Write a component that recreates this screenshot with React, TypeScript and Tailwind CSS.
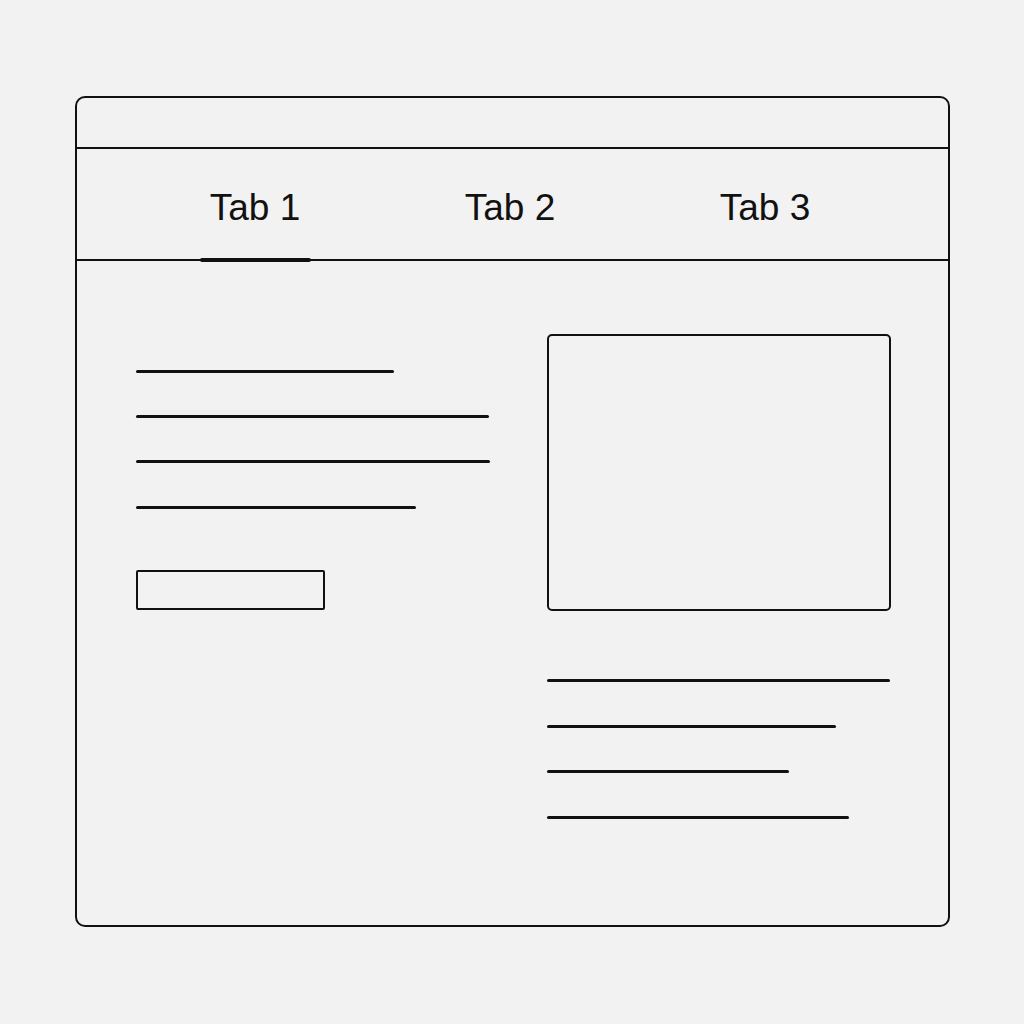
const ink = "bg-[#111111]";

const leftLines = [
  { width: 258, gap: 0 },
  { width: 353, gap: 42 },
  { width: 354, gap: 42 },
  { width: 280, gap: 43 },
];

const rightLines = [
  { width: 343, gap: 68 },
  { width: 289, gap: 43 },
  { width: 242, gap: 42 },
  { width: 302, gap: 43 },
];

const tabs = ["Tab 1", "Tab 2", "Tab 3"];

export default function App() {
  return (
    <div className="w-[1024px] h-[1024px] bg-[#f2f2f2] pt-[96px] pl-[75px] font-['Liberation_Sans',Arial,sans-serif]">
      <div className="flex h-[831px] w-[875px] flex-col rounded-[10px] border-[2.5px] border-[#111111]">
        {/* window bar */}
        <div className="h-[51px] shrink-0 border-b-[2.5px] border-[#111111]" />

        {/* tabs */}
        <div className="flex h-[112px] shrink-0 border-b-[2.5px] border-[#111111] pl-[50.5px]">
          {tabs.map((tab, index) => (
            <div key={tab} className="relative w-[255px] pt-[39.5px] text-center">
              <span className="text-[37px] leading-none text-[#111111]">{tab}</span>
              {index === 0 ? (
                <div className="absolute inset-x-0 bottom-[-2.5px] flex justify-center">
                  <div className={`h-[3.5px] w-[111px] rounded-full ${ink}`} />
                </div>
              ) : null}
            </div>
          ))}
        </div>

        {/* content */}
        <div className="flex pl-[58.5px] pt-[72.5px]">
          <div className="flex w-[411px] flex-col pt-[36px]">
            {leftLines.map((line, index) => (
              <Line key={index} width={line.width} gap={line.gap} />
            ))}
            <div className="mt-[61px] h-[40px] w-[189px] rounded-[2px] border-[2.5px] border-[#111111]" />
          </div>

          <div className="flex w-[344px] flex-col">
            <div className="h-[277px] w-[344px] rounded-[5px] border-[2.5px] border-[#111111]" />
            {rightLines.map((line, index) => (
              <Line key={index} width={line.width} gap={line.gap} />
            ))}
          </div>
        </div>
      </div>
    </div>
  );
}

function Line({ width, gap }: { width: number; gap: number }) {
  return (
    <div
      className={`h-[3px] rounded-full ${ink}`}
      style={{ width, marginTop: gap }}
    />
  );
}
